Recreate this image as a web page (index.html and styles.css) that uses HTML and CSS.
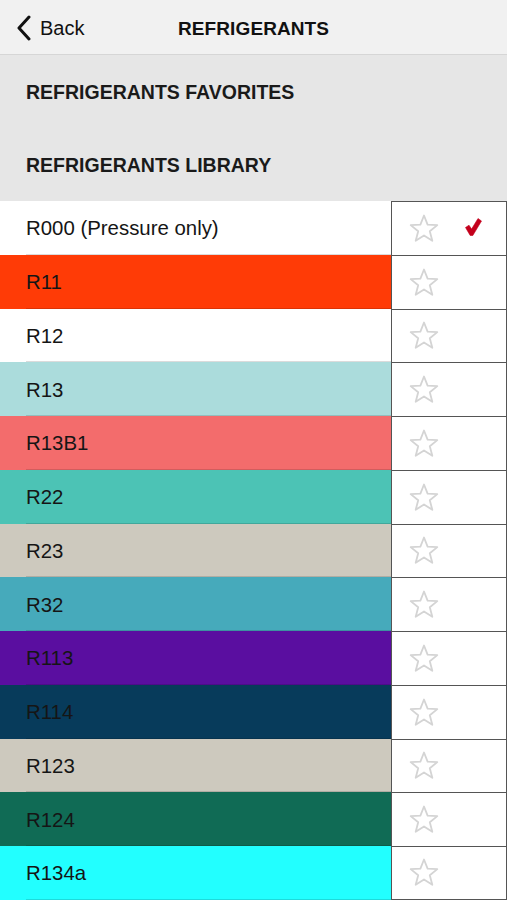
FILE: index.html
```html
<!DOCTYPE html>
<html>
<head>
<meta charset="utf-8">
<link rel="stylesheet" href="styles.css">
</head>
<body>
<div class="nav">
  <div class="back">
    <svg class="chev" width="16" height="26" viewBox="0 0 16 26"><path d="M13 2 L3 13 L13 24" fill="none" stroke="#111" stroke-width="3" stroke-linecap="round" stroke-linejoin="round"/></svg>
    <span>Back</span>
  </div>
  <div class="title">REFRIGERANTS</div>
</div>
<div class="sections">
  <div class="section">REFRIGERANTS FAVORITES</div>
  <div class="section">REFRIGERANTS LIBRARY</div>
</div>
<div class="list">
  <div class="row"><div class="label" style="--c:#ffffff">R000 (Pressure only)</div><div class="fav"><svg class="star" viewBox="0 0 30 29"><path d="M15 1.5 L18.6 10.6 L28.3 11.1 L20.8 17.3 L23.3 26.8 L15 21.5 L6.7 26.8 L9.2 17.3 L1.7 11.1 L11.4 10.6 Z" fill="none" stroke="#d4d4d4" stroke-width="1.8" stroke-linejoin="round"/></svg><svg class="check" viewBox="0 0 17 18"><path d="M0.5 9.5 L4 7.2 L6.6 11 L13 0.5 L16.5 3 L7.8 17.5 L5.2 17.5 Z" fill="#c4001c" stroke="#c4001c" stroke-width="0.6" stroke-linejoin="round"/></svg></div></div>
  <div class="row"><div class="label" style="--c:#ff3b06">R11</div><div class="fav"><svg class="star" viewBox="0 0 30 29"><path d="M15 1.5 L18.6 10.6 L28.3 11.1 L20.8 17.3 L23.3 26.8 L15 21.5 L6.7 26.8 L9.2 17.3 L1.7 11.1 L11.4 10.6 Z" fill="none" stroke="#d4d4d4" stroke-width="1.8" stroke-linejoin="round"/></svg></div></div>
  <div class="row"><div class="label" style="--c:#ffffff">R12</div><div class="fav"><svg class="star" viewBox="0 0 30 29"><path d="M15 1.5 L18.6 10.6 L28.3 11.1 L20.8 17.3 L23.3 26.8 L15 21.5 L6.7 26.8 L9.2 17.3 L1.7 11.1 L11.4 10.6 Z" fill="none" stroke="#d4d4d4" stroke-width="1.8" stroke-linejoin="round"/></svg></div></div>
  <div class="row"><div class="label" style="--c:#abdcdc">R13</div><div class="fav"><svg class="star" viewBox="0 0 30 29"><path d="M15 1.5 L18.6 10.6 L28.3 11.1 L20.8 17.3 L23.3 26.8 L15 21.5 L6.7 26.8 L9.2 17.3 L1.7 11.1 L11.4 10.6 Z" fill="none" stroke="#d4d4d4" stroke-width="1.8" stroke-linejoin="round"/></svg></div></div>
  <div class="row"><div class="label" style="--c:#f36c6c">R13B1</div><div class="fav"><svg class="star" viewBox="0 0 30 29"><path d="M15 1.5 L18.6 10.6 L28.3 11.1 L20.8 17.3 L23.3 26.8 L15 21.5 L6.7 26.8 L9.2 17.3 L1.7 11.1 L11.4 10.6 Z" fill="none" stroke="#d4d4d4" stroke-width="1.8" stroke-linejoin="round"/></svg></div></div>
  <div class="row"><div class="label" style="--c:#4cc3b5">R22</div><div class="fav"><svg class="star" viewBox="0 0 30 29"><path d="M15 1.5 L18.6 10.6 L28.3 11.1 L20.8 17.3 L23.3 26.8 L15 21.5 L6.7 26.8 L9.2 17.3 L1.7 11.1 L11.4 10.6 Z" fill="none" stroke="#d4d4d4" stroke-width="1.8" stroke-linejoin="round"/></svg></div></div>
  <div class="row"><div class="label" style="--c:#cdc9be">R23</div><div class="fav"><svg class="star" viewBox="0 0 30 29"><path d="M15 1.5 L18.6 10.6 L28.3 11.1 L20.8 17.3 L23.3 26.8 L15 21.5 L6.7 26.8 L9.2 17.3 L1.7 11.1 L11.4 10.6 Z" fill="none" stroke="#d4d4d4" stroke-width="1.8" stroke-linejoin="round"/></svg></div></div>
  <div class="row"><div class="label" style="--c:#46aabb">R32</div><div class="fav"><svg class="star" viewBox="0 0 30 29"><path d="M15 1.5 L18.6 10.6 L28.3 11.1 L20.8 17.3 L23.3 26.8 L15 21.5 L6.7 26.8 L9.2 17.3 L1.7 11.1 L11.4 10.6 Z" fill="none" stroke="#d4d4d4" stroke-width="1.8" stroke-linejoin="round"/></svg></div></div>
  <div class="row"><div class="label" style="--c:#5a0ea0">R113</div><div class="fav"><svg class="star" viewBox="0 0 30 29"><path d="M15 1.5 L18.6 10.6 L28.3 11.1 L20.8 17.3 L23.3 26.8 L15 21.5 L6.7 26.8 L9.2 17.3 L1.7 11.1 L11.4 10.6 Z" fill="none" stroke="#d4d4d4" stroke-width="1.8" stroke-linejoin="round"/></svg></div></div>
  <div class="row"><div class="label" style="--c:#073b5b">R114</div><div class="fav"><svg class="star" viewBox="0 0 30 29"><path d="M15 1.5 L18.6 10.6 L28.3 11.1 L20.8 17.3 L23.3 26.8 L15 21.5 L6.7 26.8 L9.2 17.3 L1.7 11.1 L11.4 10.6 Z" fill="none" stroke="#d4d4d4" stroke-width="1.8" stroke-linejoin="round"/></svg></div></div>
  <div class="row"><div class="label" style="--c:#cdc9be">R123</div><div class="fav"><svg class="star" viewBox="0 0 30 29"><path d="M15 1.5 L18.6 10.6 L28.3 11.1 L20.8 17.3 L23.3 26.8 L15 21.5 L6.7 26.8 L9.2 17.3 L1.7 11.1 L11.4 10.6 Z" fill="none" stroke="#d4d4d4" stroke-width="1.8" stroke-linejoin="round"/></svg></div></div>
  <div class="row"><div class="label" style="--c:#106b55">R124</div><div class="fav"><svg class="star" viewBox="0 0 30 29"><path d="M15 1.5 L18.6 10.6 L28.3 11.1 L20.8 17.3 L23.3 26.8 L15 21.5 L6.7 26.8 L9.2 17.3 L1.7 11.1 L11.4 10.6 Z" fill="none" stroke="#d4d4d4" stroke-width="1.8" stroke-linejoin="round"/></svg></div></div>
  <div class="row"><div class="label" style="--c:#22ffff">R134a</div><div class="fav"><svg class="star" viewBox="0 0 30 29"><path d="M15 1.5 L18.6 10.6 L28.3 11.1 L20.8 17.3 L23.3 26.8 L15 21.5 L6.7 26.8 L9.2 17.3 L1.7 11.1 L11.4 10.6 Z" fill="none" stroke="#d4d4d4" stroke-width="1.8" stroke-linejoin="round"/></svg></div></div>
</div>
</body>
</html>
```
FILE: styles.css
```css
* { box-sizing: border-box; }
html, body { margin: 0; padding: 0; }
body {
  width: 507px;
  height: 900px;
  overflow: hidden;
  background: #ffffff;
  font-family: "Liberation Sans", Arial, sans-serif;
  color: #111;
}
.nav {
  height: 55px;
  background: #f1f1f1;
  border-bottom: 1px solid #d6d6d6;
  display: flex;
  align-items: center;
  padding-left: 16px;
  padding-top: 3px;
}
.back {
  display: flex;
  align-items: center;
  gap: 8px;
  font-size: 20px;
  width: 162px;
}
.chev { display: block; margin-top: -2px; }
.title {
  font-weight: bold;
  font-size: 19px;
  letter-spacing: 0.1px;
}
.sections { background: #e6e6e6; }
.section {
  height: 73px;
  display: flex;
  align-items: center;
  padding-left: 26px;
  padding-top: 2px;
  font-weight: bold;
  font-size: 19.5px;
  color: #1a1a1a;
}
.list { display: flex; flex-direction: column; }
.row {
  height: 53.75px;
  display: flex;
}
.label {
  width: 391px;
  display: flex;
  align-items: center;
  padding-left: 26px;
  padding-top: 2px;
  font-size: 20.4px;
  color: #151515;
  background:
    linear-gradient(rgba(0,0,0,0.14), rgba(0,0,0,0.14)) no-repeat left 26px bottom / calc(100% - 26px) 1px,
    var(--c);
}
.fav {
  flex: 1;
  border: 1px solid #555;
  border-bottom: none;
  display: flex;
  align-items: center;
  padding-left: 17px;
  background: #fff;
}
.row:last-child .fav { border-bottom: 1px solid #555; }
.star { width: 30px; height: 29px; display: block; }
.check { width: 17px; height: 18px; display: block; margin-left: 26px; margin-top: -2px; }
```
